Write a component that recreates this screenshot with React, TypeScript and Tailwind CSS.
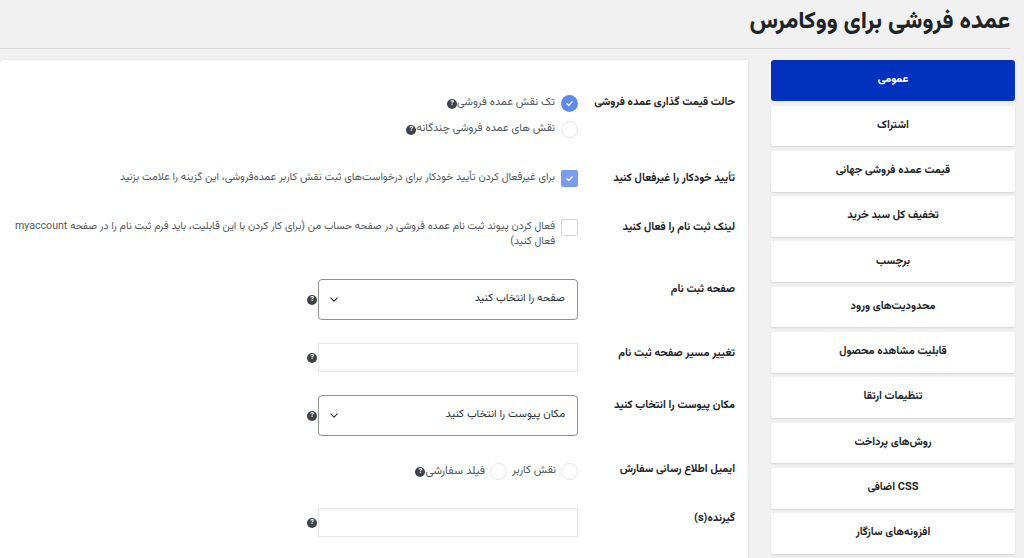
import React from "react";

function Help() {
  return (
    <span className="inline-flex h-[10px] w-[10px] shrink-0 items-center justify-center rounded-full bg-[#3c434a] text-[7.5px] font-bold leading-none text-white">
      ?
    </span>
  );
}

function Check() {
  return (
    <svg viewBox="0 0 12 12" className="h-[9px] w-[9px]" fill="none" stroke="white" strokeWidth="1.8" strokeLinecap="round" strokeLinejoin="round">
      <path d="M2.5 6.3 L5 8.6 L9.6 3.6" />
    </svg>
  );
}

function Radio({ checked }: { checked?: boolean }) {
  return checked ? (
    <span className="flex h-[17px] w-[17px] shrink-0 items-center justify-center rounded-full bg-[#6089ec]">
      <Check />
    </span>
  ) : (
    <span className="h-[17px] w-[17px] shrink-0 rounded-full border border-[#e2e4e7] bg-white" />
  );
}

function Box({ checked }: { checked?: boolean }) {
  return checked ? (
    <span className="flex h-[17px] w-[17px] shrink-0 items-center justify-center rounded-[2px] bg-[#7a9cf0]">
      <Check />
    </span>
  ) : (
    <span className="h-[17px] w-[17px] shrink-0 rounded-[2px] border border-[#d6d8db] bg-white" />
  );
}

function Chevron() {
  return (
    <svg viewBox="0 0 10 6" className="h-[5px] w-[8px]" fill="none" stroke="#2c3338" strokeWidth="1.4" strokeLinecap="round" strokeLinejoin="round">
      <path d="M1 1 L5 5 L9 1" />
    </svg>
  );
}

function Select({ text }: { text: string }) {
  return (
    <div className="flex items-center gap-[1px]">
      <div className="flex h-[41px] w-[260px] items-center justify-between rounded-[4px] border border-[#8c8f94] bg-white pl-[11px] pr-[12px]">
        <span className="text-[11px] text-[#2c3338]">{text}</span>
        <Chevron />
      </div>
      <Help />
    </div>
  );
}

function Input() {
  return (
    <div className="flex items-center gap-[1px]">
      <div className="h-[29px] w-[260px] border border-[#e6e7e8] bg-white" />
      <Help />
    </div>
  );
}

function Label({ children, pt }: { children: React.ReactNode; pt: string }) {
  return (
    <div className={`w-[170px] shrink-0 whitespace-nowrap pr-[13px] text-[11px] font-bold leading-[20px] text-[#1d2327] ${pt}`}>
      {children}
    </div>
  );
}

const tabs = [
  "عمومی",
  "اشتراک",
  "قیمت عمده فروشی جهانی",
  "تخفیف کل سبد خرید",
  "برچسب",
  "محدودیت‌های ورود",
  "قابلیت مشاهده محصول",
  "تنظیمات ارتقا",
  "روش‌های پرداخت",
  "CSS اضافی",
  "افزونه‌های سازگار",
];

export default function App() {
  return (
    <div dir="rtl" className="h-[558px] overflow-hidden bg-[#f1f1f1] font-['Vazirmatn','Noto_Sans_Arabic',sans-serif]">
      <div className="pr-[14px]">
        <h1 className="pt-[6px] text-[23.6px] font-extrabold leading-[34px] text-[#1d2327]">
          عمده فروشی برای ووکامرس
        </h1>
        <div className="mt-[8px] border-b border-[#dcdcde]" />
      </div>
      <div className="mt-[11px] flex gap-[23px] pr-[9px]">
        <nav className="flex w-[244px] shrink-0 flex-col gap-[4.5px]">
          {tabs.map((t, i) => (
            <div
              key={t}
              className={
                i === 0
                  ? "flex h-[41px] items-center justify-center rounded-[3px] bg-[#0232bd] text-[11px] font-bold text-white"
                  : "flex h-[40.8px] items-center justify-center rounded-[2px] bg-white text-[11px] font-bold text-[#1d2327] shadow-[0_1px_2px_rgba(0,0,0,0.12)]"
              }
            >
              {t}
            </div>
          ))}
        </nav>
        <div className="h-[520px] flex-1 rounded-tl-[4px] bg-white shadow-[0_0_2px_rgba(0,0,0,0.08)]">
          <div className="flex h-[90px]">
            <Label pt="pt-[33px]">حالت قیمت گذاری عمده فروشی</Label>
            <div className="flex flex-col gap-[9px] pt-[35px]">
              <div className="flex items-center gap-[6px]">
                <Radio checked />
                <span className="flex items-center text-[11px] text-[#50575e]">
                  تک نقش عمده فروشی
                  <Help />
                </span>
              </div>
              <div className="flex items-center gap-[6px]">
                <Radio />
                <span className="flex items-center text-[11px] text-[#50575e]">
                  نقش های عمده فروشی چندگانه
                  <Help />
                </span>
              </div>
            </div>
          </div>
          <div className="flex h-[50px]">
            <Label pt="pt-[19px]">تأیید خودکار را غیرفعال کنید</Label>
            <div className="flex items-center gap-[6px] self-start pt-[20px]">
              <Box checked />
              <span className="text-[10.7px] text-[#50575e]">
                برای غیرفعال کردن تأیید خودکار برای درخواست‌های ثبت نقش کاربر عمده‌فروشی، این گزینه را علامت بزنید
              </span>
            </div>
          </div>
          <div className="flex h-[62px]">
            <Label pt="pt-[18px]">لینک ثبت نام را فعال کنید</Label>
            <div className="flex items-start gap-[6px] pl-[4px] pt-[19px]">
              <Box />
              <span className="text-[10.6px] leading-[15px] text-[#50575e]">
                فعال کردن پیوند ثبت نام عمده فروشی در صفحه حساب من (برای کار کردن با این قابلیت، باید فرم ثبت نام را در صفحه myaccount فعال کنید)
              </span>
            </div>
          </div>
          <div className="flex h-[68px]">
            <Label pt="pt-[18px]">صفحه ثبت نام</Label>
            <div className="pt-[17px]">
              <Select text="صفحه را انتخاب کنید" />
            </div>
          </div>
          <div className="flex h-[52px]">
            <Label pt="pt-[14px]">تغییر مسیر صفحه ثبت نام</Label>
            <div className="pt-[13px]">
              <Input />
            </div>
          </div>
          <div className="flex h-[66px]">
            <Label pt="pt-[14px]">مکان پیوست را انتخاب کنید</Label>
            <div className="pt-[13px]">
              <Select text="مکان پیوست را انتخاب کنید" />
            </div>
          </div>
          <div className="flex h-[48px]">
            <Label pt="pt-[12px]">ایمیل اطلاع رسانی سفارش</Label>
            <div className="flex items-center gap-[5px] self-start pt-[15px]">
              <Radio />
              <span className="text-[11px] text-[#50575e]">نقش کاربر</span>
              <Radio />
              <span className="flex items-center text-[11.5px] text-[#50575e]">
                فیلد سفارشی
                <Help />
              </span>
            </div>
          </div>
          <div className="flex h-[50px]">
            <Label pt="pt-[13px]">
              گیرنده<span dir="ltr">(s)</span>
            </Label>
            <div className="pt-[12px]">
              <Input />
            </div>
          </div>
        </div>
      </div>
    </div>
  );
}
